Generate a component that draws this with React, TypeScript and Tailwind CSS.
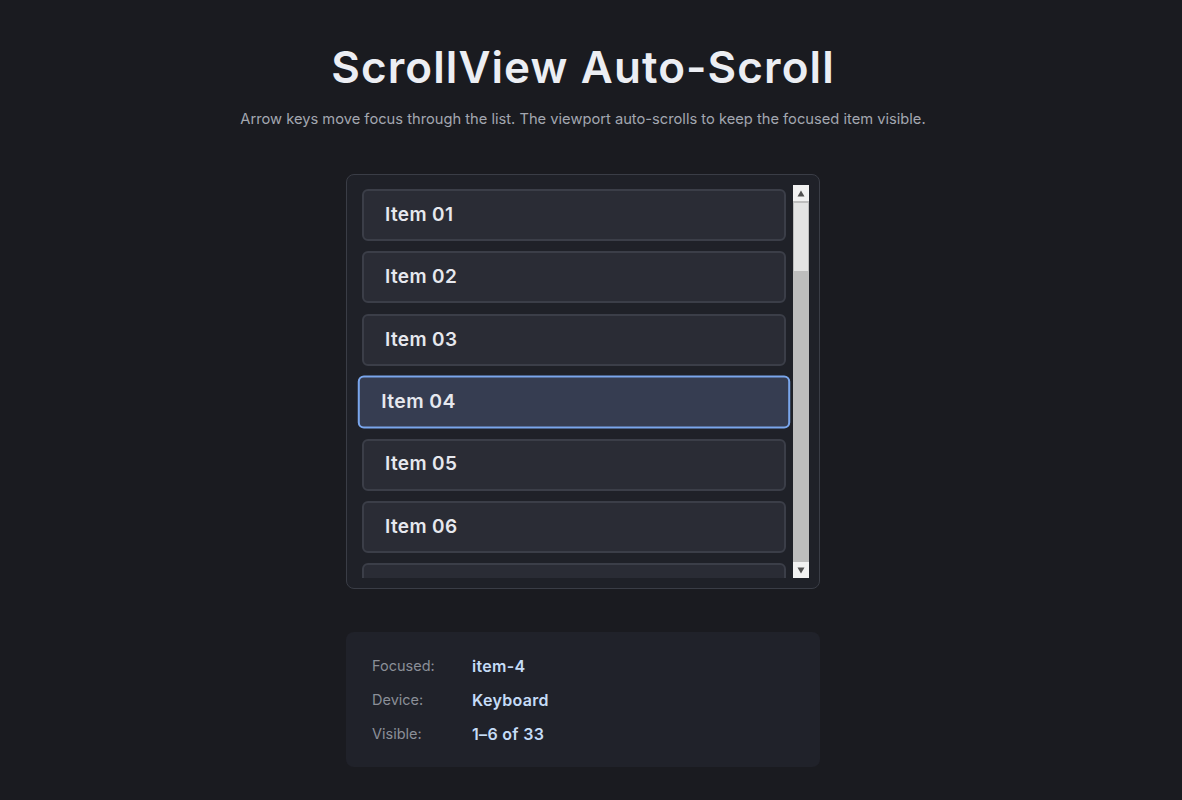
import React from 'react';

const items = Array.from({ length: 33 }, (_, i) => `Item ${String(i + 1).padStart(2, '0')}`);
const focusedIndex = 3;

export default function App() {
  return (
    <div
      className="min-h-screen w-full bg-[#1a1b20] flex flex-col items-center pr-[16px]"
      style={{ fontFamily: 'Inter, "Liberation Sans", sans-serif' }}
    >
      <h1 className="mt-[40px] text-[44px] leading-[54px] font-semibold tracking-[0.025em] text-[#eceef3]">
        ScrollView Auto-Scroll
      </h1>
      <p className="mt-[15px] text-[14.7px] leading-[20px] text-[#a3a7b0]">
        Arrow keys move focus through the list. The viewport auto-scrolls to keep the focused item visible.
      </p>

      {/* Scroll container */}
      <div className="mt-[45px] w-[474px] h-[415px] shrink-0 border border-[#3a3d46] rounded-[8px] bg-[#1f2128] p-[10px] flex">
        <div className="flex-1 overflow-hidden pl-[5px] pr-[7px] pt-[4px] flex flex-col gap-[10.4px]">
          {items.map((label, i) => {
            const focused = i === focusedIndex;
            return (
              <div
                key={label}
                className={
                  focused
                    ? 'shrink-0 h-[52px] flex items-center px-[21px] rounded-[6px] border-2 border-[#7aa6ec] bg-[#363d51] scale-[1.02]'
                    : 'shrink-0 h-[52px] flex items-center px-[21px] rounded-[6px] border-2 border-[#3b3e48] bg-[#2a2c35]'
                }
              >
                <span className="text-[19px] font-semibold tracking-[0.02em] text-[#e6e8ee]">{label}</span>
              </div>
            );
          })}
        </div>

        {/* Scrollbar */}
        <div className="w-[16px] h-full flex flex-col bg-[#bdbdbd]">
          <div className="h-[16px] bg-[#f1f1f1] flex items-center justify-center">
            <svg width="8" height="7" viewBox="0 0 8 7">
              <path d="M4 0.5 L7.5 6.5 L0.5 6.5 Z" fill="#505050" />
            </svg>
          </div>
          <div className="mt-[2px] mx-[1px] h-[68px] bg-[#e3e3e3]" />
          <div className="flex-1" />
          <div className="h-[16px] bg-[#f1f1f1] flex items-center justify-center">
            <svg width="8" height="7" viewBox="0 0 8 7">
              <path d="M0.5 0.5 L7.5 0.5 L4 6.5 Z" fill="#505050" />
            </svg>
          </div>
        </div>
      </div>

      {/* Info card */}
      <div className="mt-[43px] w-[474px] rounded-[8px] bg-[#20222a] px-[26px] pt-[24px] pb-[23px] flex flex-col gap-[14px]">
        {[
          ['Focused:', 'item-4'],
          ['Device:', 'Keyboard'],
          ['Visible:', '1–6 of 33'],
        ].map(([k, v]) => (
          <div key={k} className="flex items-center h-[20px]">
            <span className="w-[100px] text-[14.5px] text-[#8b8f98]">{k}</span>
            <span className="text-[16px] font-semibold tracking-[0.02em] text-[#c5dcf7]">{v}</span>
          </div>
        ))}
      </div>
    </div>
  );
}
